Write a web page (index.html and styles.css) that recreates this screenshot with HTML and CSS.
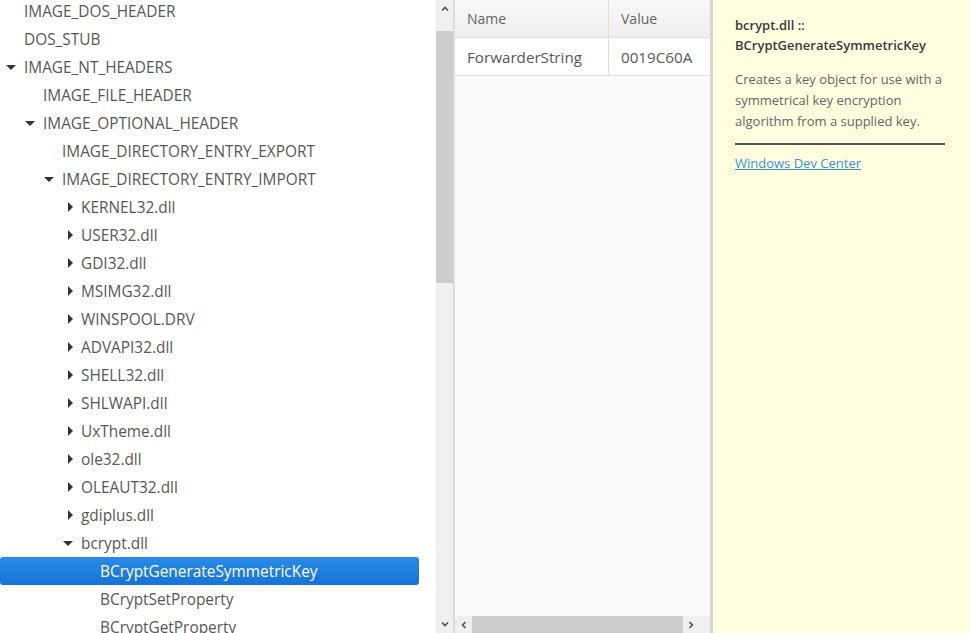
FILE: index.html
```html
<!DOCTYPE html>
<html>
<head>
<meta charset="utf-8">
<link rel="stylesheet" href="styles.css">
</head>
<body>
<div class="app">
  <div class="tree-pane">
    <ul class="tree">
      <li class="row l0"><span class="tw"></span><span class="lbl">IMAGE_DOS_HEADER</span></li>
      <li class="row l0"><span class="tw"></span><span class="lbl">DOS_STUB</span></li>
      <li class="row l0"><span class="tw"><i class="down"></i></span><span class="lbl">IMAGE_NT_HEADERS</span></li>
      <li class="row l1"><span class="tw"></span><span class="lbl">IMAGE_FILE_HEADER</span></li>
      <li class="row l1"><span class="tw"><i class="down"></i></span><span class="lbl">IMAGE_OPTIONAL_HEADER</span></li>
      <li class="row l2"><span class="tw"></span><span class="lbl">IMAGE_DIRECTORY_ENTRY_EXPORT</span></li>
      <li class="row l2"><span class="tw"><i class="down"></i></span><span class="lbl">IMAGE_DIRECTORY_ENTRY_IMPORT</span></li>
      <li class="row l3"><span class="tw"><i class="right"></i></span><span class="lbl">KERNEL32.dll</span></li>
      <li class="row l3"><span class="tw"><i class="right"></i></span><span class="lbl">USER32.dll</span></li>
      <li class="row l3"><span class="tw"><i class="right"></i></span><span class="lbl">GDI32.dll</span></li>
      <li class="row l3"><span class="tw"><i class="right"></i></span><span class="lbl">MSIMG32.dll</span></li>
      <li class="row l3"><span class="tw"><i class="right"></i></span><span class="lbl">WINSPOOL.DRV</span></li>
      <li class="row l3"><span class="tw"><i class="right"></i></span><span class="lbl">ADVAPI32.dll</span></li>
      <li class="row l3"><span class="tw"><i class="right"></i></span><span class="lbl">SHELL32.dll</span></li>
      <li class="row l3"><span class="tw"><i class="right"></i></span><span class="lbl">SHLWAPI.dll</span></li>
      <li class="row l3"><span class="tw"><i class="right"></i></span><span class="lbl">UxTheme.dll</span></li>
      <li class="row l3"><span class="tw"><i class="right"></i></span><span class="lbl">ole32.dll</span></li>
      <li class="row l3"><span class="tw"><i class="right"></i></span><span class="lbl">OLEAUT32.dll</span></li>
      <li class="row l3"><span class="tw"><i class="right"></i></span><span class="lbl">gdiplus.dll</span></li>
      <li class="row l3"><span class="tw"><i class="down"></i></span><span class="lbl">bcrypt.dll</span></li>
      <li class="row l4 selected"><span class="tw"></span><span class="lbl">BCryptGenerateSymmetricKey</span></li>
      <li class="row l4"><span class="tw"></span><span class="lbl">BCryptSetProperty</span></li>
      <li class="row l4"><span class="tw"></span><span class="lbl">BCryptGetProperty</span></li>
    </ul>
  </div>
  <div class="vscroll">
    <div class="sbtn"><svg width="8" height="5" viewBox="0 0 8 5"><path d="M1 4.5 L4 1.5 L7 4.5" fill="none" stroke="#555" stroke-width="1.6"/></svg></div>
    <div class="vthumb"></div>
    <div class="vtrack"></div>
    <div class="sbtn"><svg width="8" height="5" viewBox="0 0 8 5"><path d="M1 0.5 L4 3.5 L7 0.5" fill="none" stroke="#555" stroke-width="1.6"/></svg></div>
  </div>
  <div class="split"></div>
  <div class="table-pane">
    <div class="grid">
      <div class="trow head">
        <div class="cell c1">Name</div>
        <div class="cell c2">Value</div>
      </div>
      <div class="trow data">
        <div class="cell c1">ForwarderString</div>
        <div class="cell c2">0019C60A</div>
      </div>
    </div>
    <div class="hscroll">
      <div class="hbtn"><svg width="5" height="8" viewBox="0 0 5 8"><path d="M4.5 1 L1.5 4 L4.5 7" fill="none" stroke="#555" stroke-width="1.6"/></svg></div>
      <div class="hthumb"></div>
      <div class="hbtn"><svg width="5" height="8" viewBox="0 0 5 8"><path d="M0.5 1 L3.5 4 L0.5 7" fill="none" stroke="#555" stroke-width="1.6"/></svg></div>
    </div>
  </div>
  <div class="divider"></div>
  <div class="info">
    <div class="title">bcrypt.dll ::<br>BCryptGenerateSymmetricKey</div>
    <p class="desc">Creates a key object for use with a symmetrical key encryption algorithm from a supplied key.</p>
    <hr class="rule">
    <a class="link" href="#">Windows Dev Center</a>
  </div>
</div>
</body>
</html>
```
FILE: styles.css
```css
html, body {
  margin: 0;
  padding: 0;
  height: 100%;
  overflow: hidden;
  background: #fff;
}
body {
  font-family: "Open Sans", "Liberation Sans", sans-serif;
}
.app {
  display: flex;
  height: 633px;
  width: 969px;
}
.tree-pane {
  width: 436px;
  flex: none;
  overflow: hidden;
  background: #fff;
}
.tree {
  list-style: none;
  margin: -3px 0 0 0;
  padding: 0;
}
.row {
  display: flex;
  align-items: center;
  height: 28px;
  width: 419px;
  box-sizing: border-box;
  font-size: 15.4px;
  color: #585858;
  white-space: nowrap;
  border-radius: 3px;
}
.row.l0 { padding-left: 6px; }
.row.l1 { padding-left: 25px; }
.row.l2 { padding-left: 44px; }
.row.l3 { padding-left: 63px; }
.row.l4 { padding-left: 82px; }
.row.selected {
  background: linear-gradient(#2a8be8, #1673d8);
  color: #fff;
}
.tw {
  width: 18px;
  flex: none;
  height: 28px;
  position: relative;
}
.down {
  position: absolute;
  left: 0;
  top: 12px;
  width: 0;
  height: 0;
  border-left: 5px solid transparent;
  border-right: 5px solid transparent;
  border-top: 5px solid #333;
}
.right {
  position: absolute;
  left: 5px;
  top: 9px;
  width: 0;
  height: 0;
  border-top: 5px solid transparent;
  border-bottom: 5px solid transparent;
  border-left: 5px solid #333;
}
.lbl {
  line-height: 26px;
  margin-top: 2px;
}
.vscroll {
  width: 17px;
  flex: none;
  display: flex;
  flex-direction: column;
  background: #f0f0f0;
}
.sbtn {
  height: 31px;
  flex: none;
  display: flex;
  justify-content: center;
  align-items: flex-start;
  padding-top: 6px;
  box-sizing: border-box;
}
.sbtn:last-child {
  height: 17px;
  padding-top: 6px;
}
.vthumb {
  height: 252px;
  flex: none;
  background: #cdcdcd;
}
.vtrack {
  flex: 1;
}
.split {
  width: 2px;
  flex: none;
  background: #dcdcdc;
}
.table-pane {
  width: 255px;
  flex: none;
  display: flex;
  flex-direction: column;
  background: #fafafa;
}
.grid {
  flex: 1;
}
.trow {
  display: flex;
  height: 38px;
  box-sizing: border-box;
  border-bottom: 1px solid #dedede;
}
.trow.head {
  background: linear-gradient(#f8f8f8, #efefef);
}
.trow.data {
  background: #fff;
}
.cell {
  display: flex;
  align-items: center;
  padding-left: 12px;
  font-size: 15.2px;
  color: #585858;
  box-sizing: border-box;
  white-space: nowrap;
  overflow: hidden;
}
.trow.head .cell {
  font-size: 14px;
  color: #666;
}
.c1 {
  width: 154px;
  border-right: 1px solid #dedede;
}
.c2 {
  flex: 1;
}
.hscroll {
  height: 17px;
  flex: none;
  display: flex;
  background: #f0f0f0;
}
.hbtn {
  width: 17px;
  flex: none;
  display: flex;
  align-items: center;
  justify-content: center;
}
.hthumb {
  width: 211px;
  background: #cdcdcd;
}
.divider {
  width: 3px;
  flex: none;
  background: #d6d6d6;
}
.info {
  flex: 1;
  background: #ffffe0;
  padding: 15px 24px 0 22px;
  box-sizing: border-box;
  font-size: 13px;
}
.title {
  color: #3a3a3a;
  font-weight: 600;
  line-height: 20px;
}
.desc {
  margin: 14px 0 0 0;
  color: #666;
  line-height: 21px;
}
.rule {
  border: none;
  height: 2px;
  background: #555;
  margin: 11px 0 8px 0;
}
.link {
  color: #3a8ee0;
  text-decoration: underline;
  line-height: 20px;
}
```
